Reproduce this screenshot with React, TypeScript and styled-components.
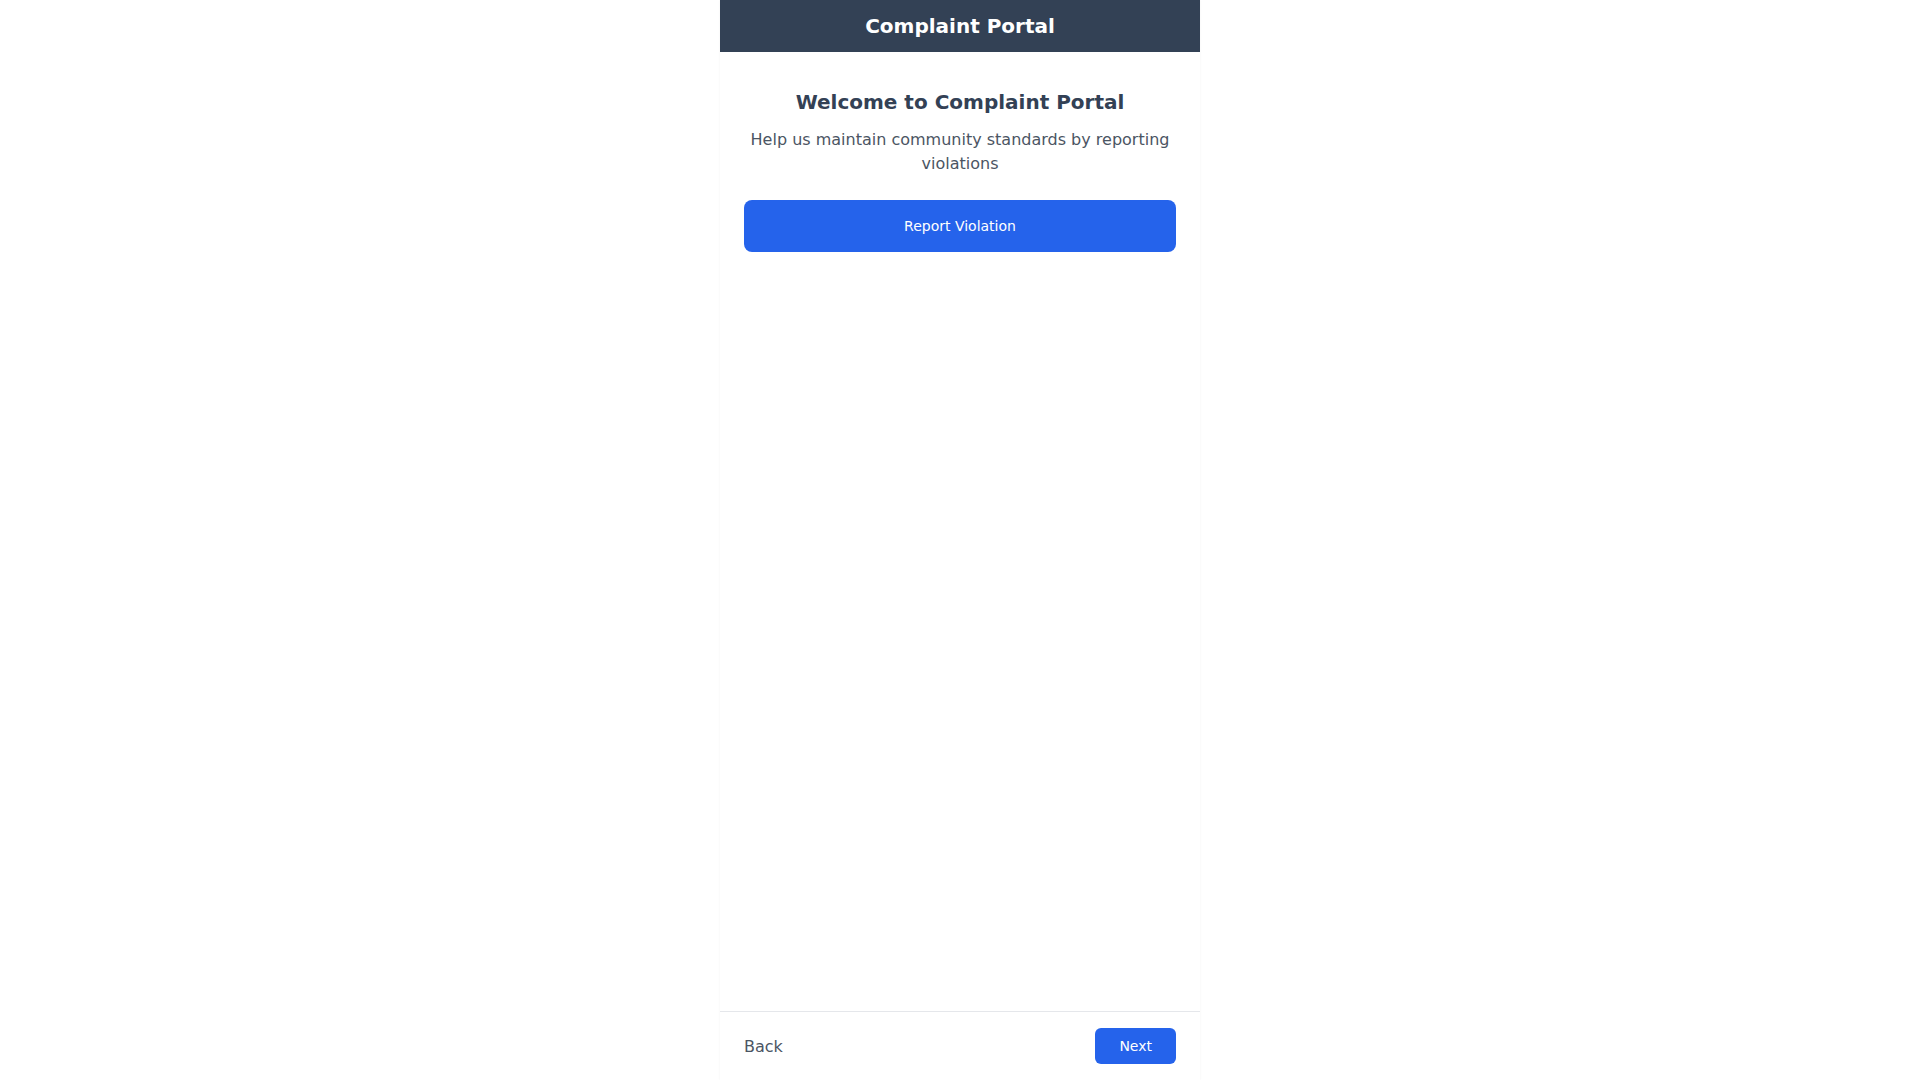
import styled, { createGlobalStyle } from 'styled-components';

const GlobalStyle = createGlobalStyle`
  html, body {
    margin: 0;
    padding: 0;
    background: #ffffff;
    font-family: 'DejaVu Sans', sans-serif;
  }
`;

const Page = styled.div`
  display: flex;
  justify-content: center;
  height: 100vh;
  width: 100%;
`;

const Panel = styled.div`
  width: 480px;
  height: 100%;
  display: flex;
  flex-direction: column;
  background: #ffffff;
  box-shadow: 0 0 2px rgba(0, 0, 0, 0.06);
`;

const Header = styled.header`
  height: 52px;
  background: #334155;
  color: #ffffff;
  display: flex;
  align-items: center;
  justify-content: center;
  font-size: 20px;
  font-weight: bold;
`;

const Content = styled.main`
  flex: 1;
  padding: 36px 24px 24px;
  display: flex;
  flex-direction: column;
  align-items: center;
  text-align: center;
`;

const Title = styled.h1`
  margin: 0 0 12px;
  font-size: 20px;
  line-height: 28px;
  font-weight: bold;
  color: #334155;
`;

const Subtitle = styled.p`
  margin: 0 0 24px;
  font-size: 16px;
  line-height: 24px;
  color: #4b5563;
`;

const Button = styled.button<{ $wide?: boolean }>`
  border: none;
  background: #2563eb;
  color: #ffffff;
  font-family: inherit;
  font-size: 14px;
  line-height: 20px;
  border-radius: ${(p) => (p.$wide ? '8px' : '6px')};
  padding: ${(p) => (p.$wide ? '16px' : '8px 24px')};
  width: ${(p) => (p.$wide ? '100%' : 'auto')};
  cursor: pointer;
`;

const Footer = styled.footer`
  border-top: 1px solid #e5e7eb;
  padding: 16px 24px;
  display: flex;
  align-items: center;
  justify-content: space-between;
`;

const BackLink = styled.button`
  border: none;
  background: none;
  padding: 0;
  font-family: inherit;
  font-size: 16px;
  color: #4b5563;
  cursor: pointer;
`;

const App = () => {
  return (
    <>
      <GlobalStyle />
      <Page>
        <Panel>
          <Header>Complaint Portal</Header>
          <Content>
            <Title>Welcome to Complaint Portal</Title>
            <Subtitle>
              Help us maintain community standards by reporting violations
            </Subtitle>
            <Button $wide>Report Violation</Button>
          </Content>
          <Footer>
            <BackLink>Back</BackLink>
            <Button>Next</Button>
          </Footer>
        </Panel>
      </Page>
    </>
  );
};

export default App;
